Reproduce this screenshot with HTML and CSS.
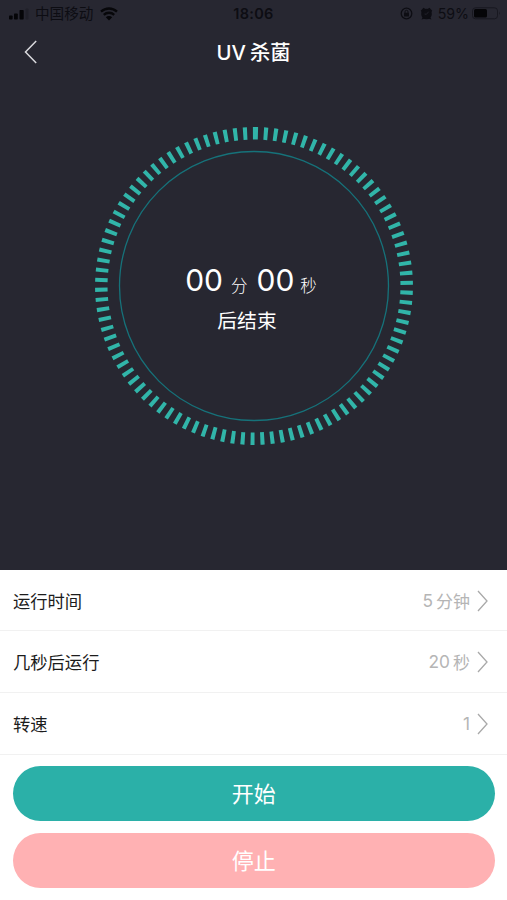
FILE: index.html
```
<!DOCTYPE html>
<html lang="zh-CN">
<head>
    <meta charset="utf-8">
    <title>UV杀菌</title>
    <link rel="stylesheet" href="styles.css">
</head>
<body>
    <div class="top">
        <div class="status">
            <div class="status-left">
                <svg class="signal" width="20" height="12" viewBox="0 0 20 12">
                    <rect x="0" y="7.5" width="3.6" height="4" rx="0.8"/>
                    <rect x="5" y="5.5" width="3.8" height="6" rx="0.8"/>
                    <rect x="10.5" y="2" width="4.2" height="9.5" rx="0.8"/>
                    <rect x="16.5" y="0.5" width="3" height="11" rx="0.8" opacity="0.2"/>
                </svg>
                <span class="carrier">中国移动</span>
                <svg class="wifi" width="18" height="14" viewBox="0 0 18 14">
                    <path d="M1 4.7a11.6 11.6 0 0 1 16 0M3.8 7.8a7.6 7.6 0 0 1 10.4 0" fill="none" stroke="#07070a" stroke-width="2.3"/>
                    <path d="M9 13.4L5.8 10.2a4.6 4.6 0 0 1 6.4 0z"/>
                </svg>
            </div>
            <span class="clock">18:06</span>
            <div class="status-right">
                <svg width="13" height="13" viewBox="0 0 13 13">
                    <circle cx="6.5" cy="6.5" r="5.3" fill="none" stroke="#0d0d13" stroke-width="1.3"/>
                    <rect x="4" y="5.8" width="5" height="3.8" rx="0.6"/>
                    <path d="M5 6V4.8a1.5 1.5 0 0 1 3 0V6" fill="none" stroke="#0d0d13"/>
                </svg>
                <svg class="alarm" width="13" height="13" viewBox="0 0 13 13">
                    <circle cx="6.5" cy="7" r="5.3"/>
                    <path d="M0.8 3.8L3.5 0.8l2 1.2-3.6 3.6zM12.2 3.8L9.5 0.8l-2 1.2 3.6 3.6zM1.5 12.5l1.6-3 2 2zM11.5 12.5l-1.6-3-2 2z"/>
                    <path d="M8.7 4.7L6.4 7.3 4.6 7" fill="none" stroke="#272731" stroke-width="0.8"/>
                </svg>
                <span class="percent">59%</span>
                <svg width="29" height="13" viewBox="0 0 29 13">
                    <rect x="0.5" y="0.8" width="25" height="11" rx="3" fill="none" stroke="#181820"/>
                    <rect class="charge" x="2" y="2.1" width="13" height="8.4" rx="1.5"/>
                    <path d="M27 4.5q1.7 1.8 0 3.6z" fill="#181820"/>
                </svg>
            </div>
        </div>
        <div class="nav">
            <svg class="back" width="14" height="24" viewBox="0 0 14 24">
                <path d="M12.2 1L1.5 12l10.7 11" fill="none" stroke="#d9d9dd" stroke-width="1.5"/>
            </svg>
            <h1>UV<span>杀菌</span></h1>
        </div>
        <div class="dial">
            <svg class="ring" width="320" height="320" viewBox="0 0 320 320">
                <circle class="ticks" cx="160" cy="160" r="152.7" transform="rotate(-90 160 160)"/>
                <circle class="line" cx="160" cy="160" r="134.5"/>
            </svg>
            <div class="countdown">
                <div class="time"><b>00</b><i>分</i><b>00</b><i>秒</i></div>
                <div class="after">后结束</div>
            </div>
        </div>
    </div>

    <div class="list">
        <div class="row">
            <span>运行时间</span>
            <div class="value">5<em>分钟</em>
                <svg width="12" height="22" viewBox="0 0 12 22"><path d="M1 1l9 10-9 10"/></svg>
            </div>
        </div>
        <div class="row">
            <span>几秒后运行</span>
            <div class="value">20<em>秒</em>
                <svg width="12" height="22" viewBox="0 0 12 22"><path d="M1 1l9 10-9 10"/></svg>
            </div>
        </div>
        <div class="row">
            <span>转速</span>
            <div class="value">1
                <svg width="12" height="22" viewBox="0 0 12 22"><path d="M1 1l9 10-9 10"/></svg>
            </div>
        </div>
    </div>

    <div class="buttons">
        <button type="button" class="start">开始</button>
        <button type="button" class="stop">停止</button>
    </div>
</body>
</html>
```
FILE: styles.css
```
* {
    box-sizing: border-box;
}

body {
    margin: 0;
    height: 900px;
    overflow: hidden;
    background-color: #fff;
    font-family: Inter, "Noto Sans CJK SC", sans-serif;
}

.top {
    height: 570px;
    background-color: #272731;
    color: #fff;
}

/* status bar */
.status {
    display: grid;
    grid-template-columns: 1fr auto 1fr;
    align-items: center;
    height: 27px;
    padding: 0 6px 0 9px;
    color: #0d0d13;
    fill: #0d0d13;
}

.status-left,
.status-right {
    display: flex;
    align-items: center;
}

.status-right {
    justify-content: flex-end;
}

.signal,
.wifi,
.charge {
    fill: #050508;
}

.carrier {
    margin: 0 7px 0 6px;
    padding-top: 1px;
    font-size: 14.6px;
    line-height: 20px;
}

.clock {
    margin-right: 3px;
    font-size: 14.5px;
    font-weight: 600;
    letter-spacing: 0.3px;
}

.alarm {
    margin-left: 7px;
}

.percent {
    margin: 0 3px 0 5px;
    font-size: 14.2px;
}

/* title bar */
.nav {
    display: flex;
    align-items: center;
    height: 50px;
    padding-left: 24px;
}

.nav h1 {
    flex: 1;
    margin: 0 38px 0 0;
    padding-top: 2px;
    text-align: center;
    font-size: 20.3px;
    font-weight: 500;
    line-height: 30px;
}

.nav h1 span {
    margin-left: 4px;
}

/* countdown dial */
.dial {
    display: grid;
    justify-items: center;
    align-items: center;
    width: 320px;
    margin: 48.5px auto 0;
}

.ring,
.countdown {
    grid-area: 1 / 1;
}

.ring circle {
    fill: none;
}

.ticks {
    stroke: #31b5a9;
    stroke-width: 12.5;
    stroke-dasharray: 4 5.775;
}

.line {
    stroke: #16727a;
    stroke-width: 1.3;
}

.countdown {
    margin: 26px 5px 0 0;
    text-align: center;
}

.time {
    display: flex;
    align-items: baseline;
    line-height: 40px;
}

.time b {
    font-size: 30px;
    font-weight: 400;
}

.time i {
    margin: 0 9px 0 8px;
    font-size: 16.5px;
    font-style: normal;
    font-weight: 300;
    transform: translateY(1px);
}

.time i:last-child {
    margin: 0 0 0 6px;
}

.after {
    margin-right: 8px;
    font-size: 19.8px;
    line-height: 33px;
}

/* settings */
.row {
    display: flex;
    justify-content: space-between;
    align-items: center;
    height: 62px;
    padding: 0 18px 0 13px;
    border-bottom: 1px solid #f1f1f1;
    color: #1c1c1c;
    font-size: 17.3px;
}

.row:first-child {
    height: 61px;
    padding-top: 1px;
}

.value {
    display: flex;
    align-items: center;
    color: #b5b5b5;
}

.value em {
    margin-left: 3px;
    font-size: 17px;
    font-style: normal;
}

.value svg {
    margin-left: 7px;
    fill: none;
    stroke: #a9a9a9;
    stroke-width: 1.3;
}

/* buttons */
.buttons {
    display: flex;
    flex-direction: column;
    gap: 12px;
    padding: 11px 12.5px 0 13px;
}

.buttons button {
    height: 55px;
    padding: 0 0 4px;
    border: none;
    border-radius: 28px;
    color: #fff;
    font-family: inherit;
    font-size: 22px;
}

.start {
    background-color: #2bb0a8;
}

.stop {
    background-color: #ffb1b3;
}
```
